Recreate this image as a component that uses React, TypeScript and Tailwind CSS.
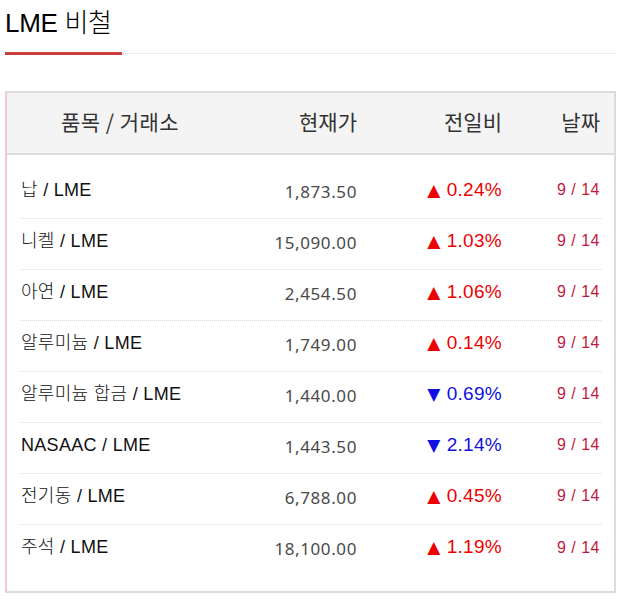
import React from 'react';

type Metal = {
  name: string;
  price: string;
  change: string;
  up: boolean;
  date: string;
};

const metals: Metal[] = [
  { name: '납 / LME', price: '1,873.50', change: '0.24%', up: true, date: '9 / 14' },
  { name: '니켈 / LME', price: '15,090.00', change: '1.03%', up: true, date: '9 / 14' },
  { name: '아연 / LME', price: '2,454.50', change: '1.06%', up: true, date: '9 / 14' },
  { name: '알루미늄 / LME', price: '1,749.00', change: '0.14%', up: true, date: '9 / 14' },
  { name: '알루미늄 합금 / LME', price: '1,440.00', change: '0.69%', up: false, date: '9 / 14' },
  { name: 'NASAAC / LME', price: '1,443.50', change: '2.14%', up: false, date: '9 / 14' },
  { name: '전기동 / LME', price: '6,788.00', change: '0.45%', up: true, date: '9 / 14' },
  { name: '주석 / LME', price: '18,100.00', change: '1.19%', up: true, date: '9 / 14' },
];

const App: React.FC = () => {
  return (
    <div className="w-[621px] min-h-[600px] bg-white font-['Liberation_Sans','Noto_Sans_CJK_KR',sans-serif]">
      {/* Title */}
      <div className="px-[5px] pt-[5px]">
        <h2 className="text-[26px] leading-[36px] text-black font-light tracking-[-0.3px]">LME 비철</h2>
        <div className="flex items-start mt-[11px] h-[3px]">
          <div className="w-[117px] h-[3px] bg-[#cc3d3d]"></div>
          <div className="flex-1 mt-[1px] border-t border-dotted border-[#d8d8d8]"></div>
        </div>
      </div>

      {/* Table */}
      <div className="mx-[5px] mt-[36px] border-2 border-[#dcdcdc] border-l-[#f2c9cd]">
        <div className="grid grid-cols-[198px_139px_145px_1fr] items-center h-[62px] px-[13px] bg-[#f4f4f4] border-b-2 border-[#dcdcdc] text-[21px] text-[#333] font-['Noto_Sans_CJK_KR',sans-serif] pb-[3px]">
          <div className="text-center pl-[2px] tracking-[0.5px]">품목 / 거래소</div>
          <div className="text-right">현재가</div>
          <div className="text-right">전일비</div>
          <div className="text-right pr-[1px]">날짜</div>
        </div>

        <div className="px-[13px] pt-[13px] pb-[15px]">
          {metals.map((m, i) => (
            <div
              key={m.name}
              className={`grid grid-cols-[198px_139px_145px_1fr] items-center h-[51px] pb-[6px] ${
                i < metals.length - 1 ? 'border-b border-dotted border-[#dadada]' : ''
              }`}
            >
              <div className="pl-[1px] text-[18px] text-[#111] font-light tracking-[0.3px]">{m.name}</div>
              <div className="text-right text-[17px] text-[#4a4a4a] tracking-[0.6px] font-['Noto_Sans',sans-serif] pt-[3px]">
                {m.price}
              </div>
              <div className={`text-right text-[19px] tracking-[0.3px] ${m.up ? 'text-[#ee0000]' : 'text-[#1010e0]'}`}>
                <span className="text-[17px] mr-[6px] font-['DejaVu_Sans',sans-serif]">{m.up ? '▲' : '▼'}</span>
                {m.change}
              </div>
              <div className="text-right pr-[1px] text-[16px] text-[#c3193f] tracking-[0.5px]">{m.date}</div>
            </div>
          ))}
        </div>
      </div>
    </div>
  );
};

export default App;
